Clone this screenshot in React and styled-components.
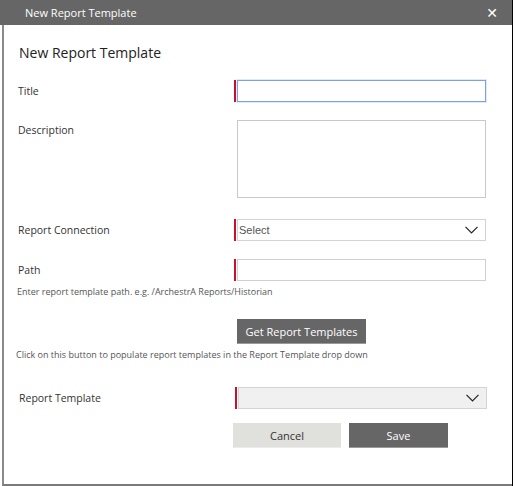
import React from 'react';
import styled, { createGlobalStyle } from 'styled-components';

const GlobalStyle = createGlobalStyle`
  html, body {
    margin: 0;
    padding: 0;
    background: #ffffff;
  }
  body {
    font-family: 'Open Sans', 'Noto Sans', sans-serif;
  }
`

const Dialog = styled.div`
  width: 513px;
  height: 486px;
  display: flex;
  flex-direction: column;
  border-right: 1px solid #000;
  box-sizing: border-box;
`
const Header = styled.div`
  height: 25px;
  background: #666666;
  display: flex;
  align-items: center;
  justify-content: space-between;
  padding: 0 14px 0 25px;
  color: #fff;
  font-size: 11px;
  flex-shrink: 0;
`
const CloseButton = styled.span`
  font-family: 'DejaVu Sans', sans-serif;
  font-size: 14px;
  font-weight: bold;
  line-height: 1;
`
const Body = styled.div`
  flex: 1;
  margin-left: 2px;
  border-left: 2px solid #8a8a8a;
  border-bottom: 2px solid #7a7a7a;
  padding: 0 0 0 12px;
  display: flex;
  flex-direction: column;
  color: #333;
`
const Heading = styled.h1`
  margin: 18px 0 0 3px;
  font-size: 14px;
  font-weight: 400;
  color: #222;
  line-height: 20px;
`
const Row = styled.div`
  display: flex;
  align-items: ${p => (p.$top ? 'flex-start' : 'center')};
  margin-top: ${p => p.$mt}px;
  padding-left: ${p => p.$pl || 0}px;
`
const Label = styled.label`
  width: ${p => p.$w || 216}px;
  font-size: 10.5px;
  color: #333;
  flex-shrink: 0;
  padding-top: ${p => p.$pt || 0}px;
`
const Marker = styled.span`
  width: 2px;
  height: 22px;
  background: ${p => (p.$hidden ? 'transparent' : '#c8102e')};
  margin-right: 1px;
  flex-shrink: 0;
`
const TextInput = styled.div`
  width: 249px;
  height: 22px;
  box-sizing: border-box;
  border: 1px solid ${p => (p.$focused ? '#7da2e3' : '#d0d0d0')};
  box-shadow: ${p => (p.$focused ? '0 0 0 1px #dfe9f9' : 'none')};
  background: #fff;
`
const TextArea = styled.div`
  width: 249px;
  height: 78px;
  box-sizing: border-box;
  border: 1px solid #c8c8c8;
  background: #fff;
`
const Select = styled.div`
  width: 249px;
  height: 22px;
  box-sizing: border-box;
  border: 1px solid #d3d3d3;
  background: ${p => (p.$disabled ? '#f0f0f0' : '#fff')};
  display: flex;
  align-items: center;
  justify-content: space-between;
  padding: 0 7px 0 1px;
  font-family: 'Liberation Sans', Arial, sans-serif;
  font-size: 11px;
  color: #555;
`
const Hint = styled.div`
  font-size: 9px;
  color: #555;
  margin: ${p => p.$mt}px 0 0 ${p => p.$ml || 0}px;
  line-height: 12px;
`
const ActionButton = styled.div`
  width: ${p => p.$w}px;
  height: 25px;
  box-sizing: border-box;
  background: ${p => (p.$primary ? '#666666' : '#e0e0dc')};
  color: ${p => (p.$primary ? '#fff' : '#333')};
  border-bottom: 1px solid ${p => (p.$primary ? '#9a9a9a' : '#ececec')};
  font-size: 11px;
  display: flex;
  align-items: center;
  justify-content: center;
`
const FetchRow = styled.div`
  margin: 21px 0 0 221px;
`
const Footer = styled.div`
  display: flex;
  gap: 8px;
  margin: 14px 0 0 217px;
`

const Chevron = () => (
  <svg width="13" height="8" viewBox="0 0 13 8">
    <polyline points="0.5,0.8 6.5,6.8 12.5,0.8" fill="none" stroke="#222" strokeWidth="1.2" />
  </svg>
)

const App = () => {
  return (
    <>
      <GlobalStyle />
      <Dialog>
        <Header>
          <span>New Report Template</span>
          <CloseButton>✕</CloseButton>
        </Header>
        <Body>
          <Heading>New Report Template</Heading>
          <Row $mt={17} $pl={2}>
            <Label>Title</Label>
            <Marker />
            <TextInput $focused />
          </Row>
          <Row $mt={18} $top $pl={2}>
            <Label $pt={3}>Description</Label>
            <Marker $hidden />
            <TextArea />
          </Row>
          <Row $mt={21} $pl={2}>
            <Label>Report Connection</Label>
            <Marker />
            <Select>
              <span>Select</span>
              <Chevron />
            </Select>
          </Row>
          <Row $mt={18} $pl={2}>
            <Label>Path</Label>
            <Marker />
            <TextInput />
          </Row>
          <Hint $mt={5} $ml={1}>Enter report template path. e.g. /ArchestrA Reports/Historian</Hint>
          <FetchRow>
            <ActionButton $primary $w={129}>Get Report Templates</ActionButton>
          </FetchRow>
          <Hint $mt={5}>Click on this button to populate report templates in the Report Template drop down</Hint>
          <Row $mt={26} $pl={3}>
            <Label>Report Template</Label>
            <Marker />
            <Select $disabled>
              <span />
              <Chevron />
            </Select>
          </Row>
          <Footer>
            <ActionButton $w={108}>Cancel</ActionButton>
            <ActionButton $primary $w={99}>Save</ActionButton>
          </Footer>
        </Body>
      </Dialog>
    </>
  );
};

export default App;
